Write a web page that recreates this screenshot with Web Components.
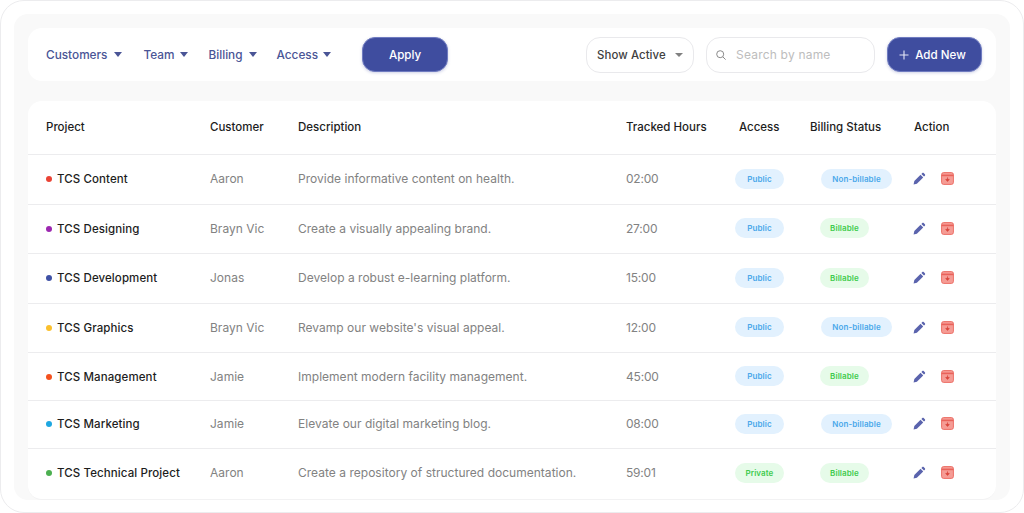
<!DOCTYPE html>
<html><head><meta charset="utf-8">
<style>
html,body{margin:0;padding:0;background:#fff}
body{font-family:Inter,"Liberation Sans",sans-serif;width:1024px;height:513px;overflow:hidden}
</style></head><body>
<app-frame>
<filter-bar>
  <filter-menu label="Customers" gap="7" style="margin-right:21px"></filter-menu>
  <filter-menu label="Team" gap="6" style="margin-right:20px"></filter-menu>
  <filter-menu label="Billing" gap="6" style="margin-right:20px"></filter-menu>
  <filter-menu label="Access" gap="5" style="margin-right:31px"></filter-menu>
  <primary-button style="width:86px">Apply</primary-button>
  <span style="flex:1"></span>
  <status-select style="margin-right:12px">Show Active</status-select>
  <search-box style="margin-right:12px"></search-box>
  <primary-button plus style="width:95px;padding-right:5px">Add New</primary-button>
</filter-bar>
<project-table>
  <head-row></head-row>
  <project-row h="50" pb="2" tp="0" dot="#ea4335" name="TCS Content" customer="Aaron" desc="Provide informative content on health." hours="02:00" access="Public" billing="Non-billable"></project-row>
  <project-row h="49" pb="2" tp="1" dot="#9c27b0" name="TCS Designing" customer="Brayn Vic" desc="Create a visually appealing brand." hours="27:00" access="Public" billing="Billable"></project-row>
  <project-row h="50" pb="2" tp="0" dot="#3f51a5" name="TCS Development" customer="Jonas" desc="Develop a robust e-learning platform." hours="15:00" access="Public" billing="Billable"></project-row>
  <project-row h="49" pb="2" tp="1" dot="#fbc02d" name="TCS Graphics" customer="Brayn Vic" desc="Revamp our website's visual appeal." hours="12:00" access="Public" billing="Non-billable"></project-row>
  <project-row h="48" pb="1" tp="1" dot="#f4511e" name="TCS Management" customer="Jamie" desc="Implement modern facility management." hours="45:00" access="Public" billing="Billable"></project-row>
  <project-row h="48" pb="2" tp="0" dot="#1ea7e1" name="TCS Marketing" customer="Jamie" desc="Elevate our digital marketing blog." hours="08:00" access="Public" billing="Non-billable"></project-row>
  <project-row h="51" pb="4" tp="0" last dot="#4caf50" name="TCS Technical Project" customer="Aaron" desc="Create a repository of structured documentation." hours="59:01" access="Private" billing="Billable"></project-row>
</project-table>
</app-frame>
<script>
const COLS='grid-template-columns:164px 88px 328px 109px 75px 104px 1fr;';
function def(name,html){
  customElements.define(name,class extends HTMLElement{
    constructor(){super();this.attachShadow({mode:'open'});}
    connectedCallback(){this.shadowRoot.innerHTML=typeof html==='function'?html(this):html;}
  });
}
const a=(e,n)=>e.getAttribute(n)||'';
def('app-frame',`<style>
:host{display:block;box-sizing:border-box;width:1024px;height:513px;border:1px solid #ececee;border-radius:24px;padding:13px;background:#fff}
.p{box-sizing:border-box;height:486px;background:#f9f9f9;border-radius:14px;padding:14px;display:flex;flex-direction:column;gap:20px}
</style><div class="p"><slot></slot></div>`);
def('filter-bar',`<style>
:host{display:flex;align-items:center;box-sizing:border-box;height:53px;background:#fff;border-radius:14px;padding:0 14px 0 18px;flex:none}
</style><slot></slot>`);
def('filter-menu',e=>`<style>
:host{display:inline-flex;align-items:center;gap:${a(e,'gap')}px;font:500 11.8px Inter,sans-serif;color:#4a5596}
i{width:0;height:0;border:4.5px solid transparent;border-top:5px solid #4a5596;border-bottom:0}
</style><span>${a(e,'label')}</span><i></i>`);
def('primary-button',e=>`<style>
:host{display:inline-flex;align-items:center;justify-content:center;gap:6px;box-sizing:border-box;height:35px;background:#3f4d9f;border:1px solid #6f7bc0;border-radius:13px;color:#fff;font:500 11.6px Inter,sans-serif;flex:none;box-shadow:0 1px 3px rgba(63,77,159,.25)}
svg{width:10px;height:10px;margin-left:1px}
</style>${e.hasAttribute('plus')?'<svg viewBox="0 0 10 10"><path d="M5 .5v9M.5 5h9" stroke="#e6e8f6" stroke-width="1.1" fill="none"/></svg>':''}<slot></slot>`);
def('status-select',`<style>
:host{display:inline-flex;align-items:center;justify-content:space-between;box-sizing:border-box;width:108px;height:36px;padding:0 10px 0 10px;border:1px solid #e9e9ec;border-radius:14px;font:500 11.4px Inter,sans-serif;letter-spacing:.1px;color:#404040;flex:none}
i{width:0;height:0;border:4px solid transparent;border-top:4.5px solid #808080;border-bottom:0}
</style><slot></slot><i></i>`);
def('search-box',`<style>
:host{display:inline-flex;align-items:center;gap:10px;box-sizing:border-box;width:169px;height:36px;padding:0 9px;border:1px solid #e9e9ec;border-radius:14px;font:400 12px Inter,sans-serif;letter-spacing:.2px;color:#bdbdbd;flex:none}
svg{width:10px;height:10px}
</style><svg viewBox="0 0 10 10" fill="none" stroke="#8a8a8a" stroke-width="1"><circle cx="4.2" cy="4.2" r="3.5"/><path d="M6.8 6.8L9.6 9.6"/></svg><span>Search by name</span>`);
def('project-table',`<style>
:host{display:block;box-sizing:border-box;height:399px;background:#fff;border-radius:14px;border-bottom:1px solid #f2f2f3;flex:none}
</style><slot></slot>`);
def('head-row',`<style>
:host{display:grid;${COLS}align-items:center;box-sizing:border-box;height:54px;padding-left:18px;padding-bottom:1px;border-bottom:1px solid #ececee;font:500 11.5px Inter,sans-serif;color:#1d1d1d}
.c{padding-left:4px}
</style><span>Project</span><span>Customer</span><span>Description</span><span>Tracked Hours</span><span class="c">Access</span><span>Billing Status</span><span>Action</span>`);
def('status-pill',e=>{const g=a(e,'tone')==='green';return `<style>
:host{display:inline-flex;align-items:center;justify-content:center;box-sizing:border-box;height:20px;width:${a(e,'w')}px;border-radius:10px;font:600 8px Inter,sans-serif;letter-spacing:.1px;background:${g?'#e6fbe9':'#e2f1fe'};color:${g?'#3ecb4e':'#4aa8ea'}}
</style><slot></slot>`});
def('row-actions',`<style>
:host{display:inline-flex;align-items:center;gap:15px;margin-left:-1px;vertical-align:middle}
svg{width:13px;height:13px;display:block}
</style>
<svg viewBox="0 0 13 13"><path d="M.6 12.4l.7-3.3 6.3-6.3 2.6 2.6-6.3 6.3z" fill="#5a63ad"/><path d="M8.4 2l.9-.9c.4-.4 1-.4 1.4 0l1.2 1.2c.4.4.4 1 0 1.4l-.9.9z" fill="#5a63ad"/></svg>
<svg viewBox="0 0 13 13"><rect x=".6" y=".6" width="11.8" height="11.8" rx="2" fill="#f59c95" stroke="#ec6f66" stroke-width="1"/><path d="M.6 3.4h11.8" stroke="#e9625a" stroke-width="1.6"/><path d="M6.5 5.4v2.6M4.8 7.4l1.7 2 1.7-2z" fill="#d9443a" stroke="#d9443a" stroke-width=".8"/></svg>`);
def('project-row',e=>{
 const g=a(e,'billing')==='Billable';
 return `<style>
:host{display:grid;${COLS}align-items:center;box-sizing:border-box;height:${a(e,'h')}px;padding-left:18px;padding-bottom:${a(e,'pb')}px;${e.hasAttribute('last')?'':'border-bottom:1px solid #ececee;'}font:400 12px/16px Inter,sans-serif;color:#828282;letter-spacing:.02px}
.n{display:flex;align-items:center;gap:5px;font-weight:500;font-size:11.5px;line-height:16px;letter-spacing:.1px;color:#1d1d1d}
.n i{width:6px;height:6px;border-radius:50%;background:${a(e,'dot')}}
.t{padding-top:${a(e,'tp')}px}
.h{letter-spacing:-.2px}
.b{padding-left:${g?10:11}px}
.p,.b,.x{display:flex;align-items:center}
</style>
<span class="n t"><i></i>${a(e,'name')}</span><span class="t">${a(e,'customer')}</span><span class="t">${a(e,'desc')}</span><span class="h t">${a(e,'hours')}</span>
<span class="p"><status-pill w="49" tone="${a(e,'access')==='Private'?'green':'blue'}">${a(e,'access')}</status-pill></span>
<span class="b"><status-pill w="${g?49:71}" tone="${g?'green':'blue'}">${a(e,'billing')}</status-pill></span>
<span class="x"><row-actions></row-actions></span>`});
</script>
</body></html>
